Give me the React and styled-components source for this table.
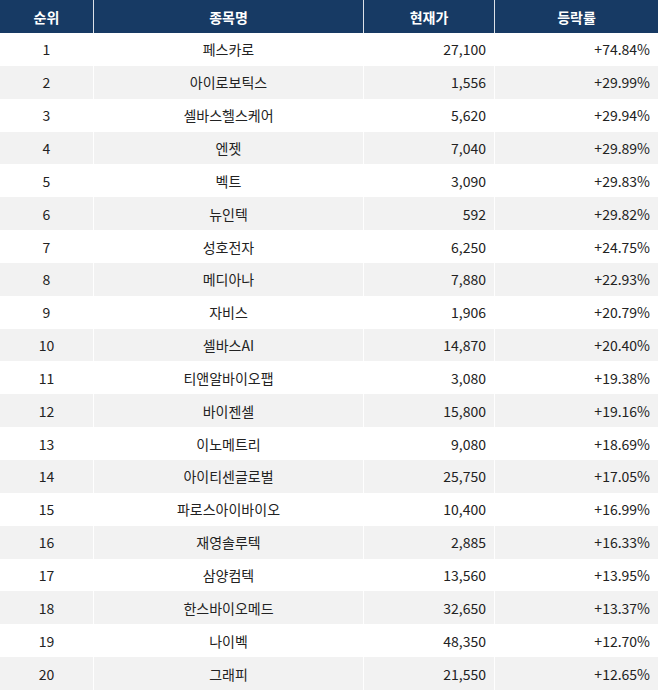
import React from "react";
import styled, { createGlobalStyle } from "styled-components";

const GlobalStyle = createGlobalStyle`
  html, body { margin: 0; padding: 0; background: #ffffff; }
  body { font-family: "Noto Sans CJK KR", "Noto Sans", sans-serif; }
`;

const data = [
  ["페스카로", "27,100", "+74.84%"],
  ["아이로보틱스", "1,556", "+29.99%"],
  ["셀바스헬스케어", "5,620", "+29.94%"],
  ["엔젯", "7,040", "+29.89%"],
  ["벡트", "3,090", "+29.83%"],
  ["뉴인텍", "592", "+29.82%"],
  ["성호전자", "6,250", "+24.75%"],
  ["메디아나", "7,880", "+22.93%"],
  ["자비스", "1,906", "+20.79%"],
  ["셀바스AI", "14,870", "+20.40%"],
  ["티앤알바이오팹", "3,080", "+19.38%"],
  ["바이젠셀", "15,800", "+19.16%"],
  ["이노메트리", "9,080", "+18.69%"],
  ["아이티센글로벌", "25,750", "+17.05%"],
  ["파로스아이바이오", "10,400", "+16.99%"],
  ["재영솔루텍", "2,885", "+16.33%"],
  ["삼양컴텍", "13,560", "+13.95%"],
  ["한스바이오메드", "32,650", "+13.37%"],
  ["나이벡", "48,350", "+12.70%"],
  ["그래피", "21,550", "+12.65%"],
];

const Table = styled.div`
  width: 658px;
  height: 690px;
  display: grid;
  grid-template-rows: 33px repeat(20, 1fr);
  font-family: "Noto Sans CJK KR", "Noto Sans", sans-serif;
  font-size: 14px;
  color: #222222;
  overflow: hidden;
`;

const Row = styled.div`
  display: grid;
  grid-template-columns: 93px 270px 131px 164px;
  background: ${(p) => (p.$header ? "#173a64" : p.$alt ? "#f2f2f2" : "#ffffff")};
  color: ${(p) => (p.$header ? "#ffffff" : "#222222")};
  font-weight: ${(p) => (p.$header ? 700 : 400)};
`;

const Cell = styled.div`
  display: flex;
  align-items: center;
  justify-content: ${(p) => (p.$align === "right" ? "flex-end" : "center")};
  padding: ${(p) => (p.$align === "right" ? "0 8px 0 0" : "0")};
  border-left: 1px solid ${(p) => (p.$header ? "rgba(255,255,255,0.85)" : "rgba(255,255,255,0.9)")};
  &:first-child { border-left: none; }
  white-space: nowrap;
  line-height: 1;
`;

export default function App() {
  return (
    <>
      <GlobalStyle />
      <Table>
        <Row $header>
          <Cell $header>순위</Cell>
          <Cell $header>종목명</Cell>
          <Cell $header>현재가</Cell>
          <Cell $header>등락률</Cell>
        </Row>
        {data.map(([name, price, rate], i) => (
          <Row key={i} $alt={i % 2 === 1}>
            <Cell>{i + 1}</Cell>
            <Cell>{name}</Cell>
            <Cell $align="right">{price}</Cell>
            <Cell $align="right">{rate}</Cell>
          </Row>
        ))}
      </Table>
    </>
  );
}
